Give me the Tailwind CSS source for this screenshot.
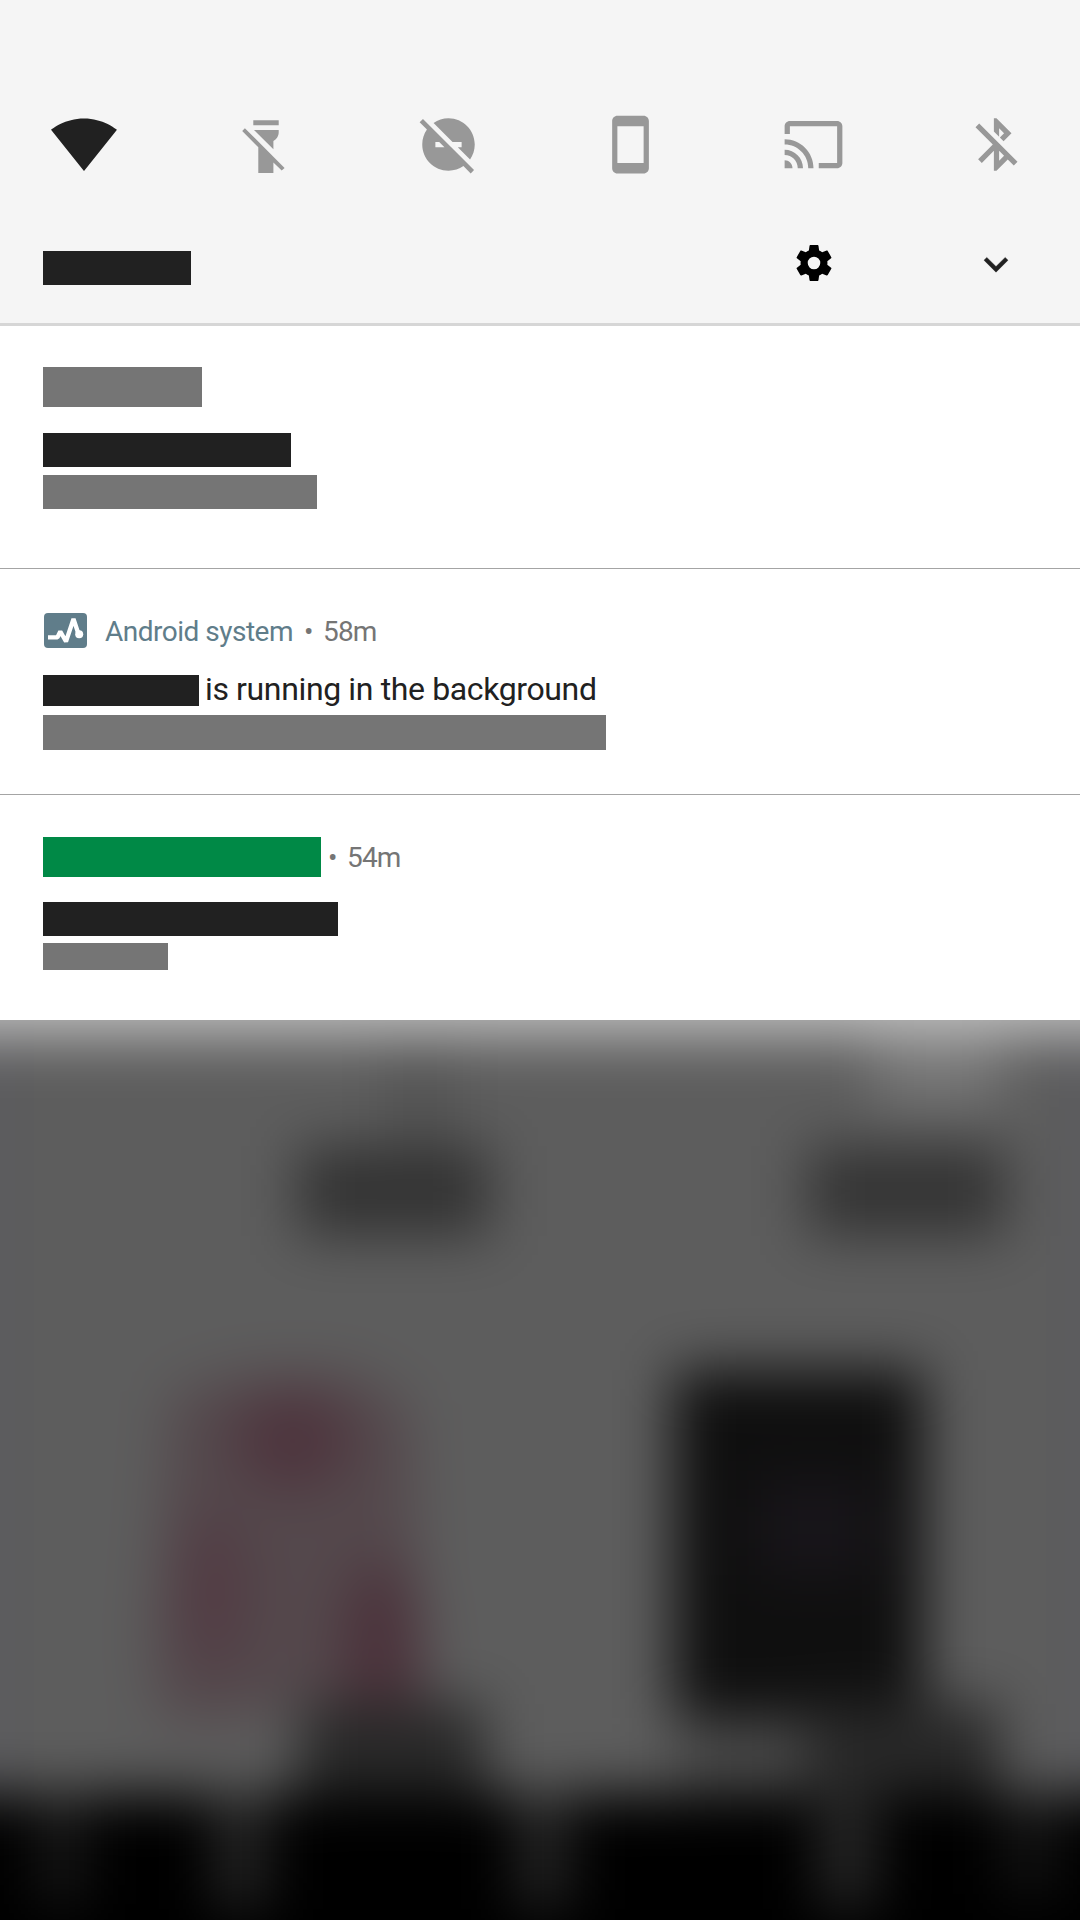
<!DOCTYPE html>
<html lang="en">
<head>
<meta charset="utf-8">
<title>Notification shade</title>
<script src="https://cdn.jsdelivr.net/npm/@tailwindcss/browser@4"></script>
</head>
<body class="w-[1080px] h-[1920px] flex flex-col overflow-hidden bg-[#5d5d5d] font-[Roboto,sans-serif]">

<!-- Quick settings -->
<header class="h-[326px] shrink-0 bg-[#f5f5f5] border-b-3 border-[#d6d6d6] flex flex-col pt-[108px]">
  <div class="pl-12 grid grid-cols-[182px_182px_182px_183px_183px_72px] h-[73px] text-[#989898] fill-current">
    <div class="w-[72px] pb-[2px] flex items-center justify-center text-[#212121]">
      <svg class="size-[68px]" viewBox="0 0 24 24"><path d="M12.01 21.49L23.64 7c-.45-.34-4.93-4-11.64-4C5.28 3 .81 6.66.36 7l11.63 14.49.01.01.01-.01z"/></svg>
    </div>
    <div class="w-[72px] flex items-start justify-center">
      <svg class="size-[72px]" viewBox="0 0 72 72"><path d="M23.3 12.2H48.7V17.2H23.3ZM24 22H48.7V24.5C48.7 28 46.5 31.5 43.4 33V41.2ZM14.9 20.2L54.6 59.9L51.7 62.6L43.4 54.4V65H28.3V39.2L12.2 23.1Z"/></svg>
    </div>
    <div class="w-[72px] flex items-center justify-center">
      <svg class="size-[63px]" viewBox="0 0 24 24"><path d="M17 11v2h-1.46l4.68 4.68C21.34 16.07 22 14.11 22 12c0-5.52-4.48-10-10-10-2.11 0-4.07.66-5.68 1.78L13.54 11H17zM2.27 2.27L1 3.54l2.78 2.78C2.66 7.93 2 9.89 2 12c0 5.52 4.48 10 10 10 2.11 0 4.07-.66 5.68-1.78L20.46 23l1.27-1.27L2.27 2.27zM7 13v-2h1.46l2 2H7z"/></svg>
    </div>
    <div class="w-[72px] flex items-center justify-center">
      <svg class="size-[63px]" viewBox="0 0 24 24"><path d="M17 1.01L7 1c-1.1 0-1.99.9-1.99 2v18c0 1.1.89 2 1.99 2h10c1.1 0 2-.9 2-2V3c0-1.1-.9-1.99-2-1.99zM17 19H7V5h10v14z"/></svg>
    </div>
    <div class="w-[72px] flex items-center justify-center">
      <svg class="size-[63px]" viewBox="0 0 24 24"><path d="M21 3H3c-1.1 0-2 .9-2 2v3h2V5h18v14h-7v2h7c1.1 0 2-.9 2-2V5c0-1.1-.9-2-2-2zM1 18v3h3c0-1.66-1.34-3-3-3zm0-4v2c2.76 0 5 2.24 5 5h2c0-3.87-3.13-7-7-7zm0-4v2c4.97 0 9 4.03 9 9h2c0-6.08-4.93-11-11-11z"/></svg>
    </div>
    <div class="w-[72px] flex items-center justify-center">
      <svg class="size-[63px]" viewBox="0 0 24 24"><path d="M13 5.83l1.88 1.88-1.6 1.6 1.41 1.41 3.02-3.02L12 2h-1v5.03l2 2v-3.2zM5.41 4L4 5.41 10.59 12 5 17.59 6.41 19 11 14.41V22h1l4.29-4.29 2.3 2.29L20 18.59 5.41 4zM13 18.17v-3.76l1.88 1.88L13 18.17z"/></svg>
    </div>
  </div>
  <div class="flex pl-[43px] pt-[59px]">
    <div class="mt-[11px] w-[148px] h-[34px] bg-[#212121]"></div>
    <svg class="ml-[601px] mt-[1px] w-[44px] h-[44px] fill-black" viewBox="-.28 -.28 24.56 24.56"><path d="M19.43 12.98c.04-.32.07-.64.07-.98s-.03-.66-.07-.98l2.11-1.65c.19-.15.24-.42.12-.64l-2-3.46c-.12-.22-.39-.3-.61-.22l-2.49 1c-.52-.4-1.08-.73-1.69-.98l-.38-2.65C14.46 2.18 14.25 2 14 2h-4c-.25 0-.46.18-.49.42l-.38 2.65c-.61.25-1.17.59-1.69.98l-2.49-1c-.23-.09-.49 0-.61.22l-2 3.46c-.13.22-.07.49.12.64l2.11 1.65c-.04.32-.07.65-.07.98s.03.66.07.98l-2.11 1.65c-.19.15-.24.42-.12.64l2 3.46c.12.22.39.3.61.22l2.49-1c.52.4 1.08.73 1.69.98l.38 2.65c.03.24.24.42.49.42h4c.25 0 .46-.18.49-.42l.38-2.65c.61-.25 1.17-.59 1.69-.98l2.49 1c.23.09.49 0 .61-.22l2-3.46c.12-.22.07-.49-.12-.64l-2.11-1.65zM12 15.5A3.5 3.5 0 1 1 12 8.5A3.5 3.5 0 1 1 12 15.5z"/></svg>
    <svg class="ml-[136px] size-12 fill-[#212121] stroke-[#212121]" viewBox="0 0 24 24" stroke-width=".2"><path d="M16.59 8.7L12 13.27 7.41 8.7 6 10.1l6 6 6-6z"/></svg>
  </div>
</header>

<!-- Notifications -->
<main class="shrink-0 bg-white">
  <section class="h-[243px] border-b border-[#a4a4a4] pl-[43px] pt-[41px]">
    <div class="w-[159px] h-10 bg-[#757575]"></div>
    <div class="mt-[26px] w-[248px] h-[34px] bg-[#212121]"></div>
    <div class="mt-2 w-[274px] h-[34px] bg-[#757575]"></div>
  </section>
  <section class="h-[226px] border-b border-[#a4a4a4] pl-[43px] pt-[44px]">
    <div class="flex h-[35px] text-[28px] leading-[36px] tracking-[-0.5px] text-[#757575]">
      <svg class="ml-px w-[43px] h-[35px] shrink-0" viewBox="0 0 43 35"><rect width="43" height="35" rx="4" fill="#607d8a"/><path d="M4 24.3H13.5L16.3 18.5L22 28.5L29.5 6L34.5 21" fill="none" stroke="#fff" stroke-width="4.3" stroke-linejoin="bevel"/><circle cx="35.2" cy="21.3" r="4" fill="#fff"/></svg>
      <span class="ml-[18px] mt-[1px] w-[199px] text-[#607d8a]">Android system</span>
      <span class="mt-[1px] w-[19px]">•</span>
      <span class="mt-[1px] tracking-[-0.8px]">58m</span>
    </div>
    <div class="mt-[22px] flex h-10 items-start">
      <div class="mt-[5px] w-[156px] h-[31px] bg-[#212121]"></div>
      <p class="ml-[6px] text-[32px] leading-[38px] tracking-[-0.37px] text-[#212121] whitespace-nowrap">is running in the background</p>
    </div>
    <div class="mt-[5px] w-[563px] h-[35px] bg-[#757575]"></div>
  </section>
  <section class="h-[225px] pl-[43px] pt-[42px]">
    <div class="flex h-10 text-[28px] leading-[42px] tracking-[-0.8px] text-[#757575]">
      <div class="w-[278px] h-10 bg-[#008946]"></div>
      <span class="ml-[7px] w-[19px]">•</span>
      <span>54m</span>
    </div>
    <div class="mt-[25px] w-[295px] h-[34px] bg-[#212121]"></div>
    <div class="mt-[7px] w-[125px] h-[27px] bg-[#757575]"></div>
  </section>
</main>

<!-- Dimmed, blurred app behind the shade -->
<svg class="block w-[1080px] h-[900px] shrink-0" viewBox="0 0 1080 900">
  <defs>
    <filter id="soft" filterUnits="userSpaceOnUse" x="-150" y="-150" width="1380" height="1200" color-interpolation-filters="sRGB"><feGaussianBlur stdDeviation="28"/></filter>
  </defs>
  <g filter="url(#soft)">
    <rect x="-200" y="-200" width="1480" height="1300" fill="#5d5d5d"/>
    <rect x="-200" y="-200" width="215" height="1300" fill="#5b5b5e"/>
    <rect x="1065" y="-200" width="215" height="1300" fill="#5b5b5e"/>
    <rect x="385" y="30" width="70" height="110" fill="#545454"/>
    <rect x="873" y="0" width="130" height="88" fill="#757575"/>
    <rect x="-200" y="-200" width="1480" height="215" fill="#c1c1c1"/>
    <rect x="298" y="126" width="192" height="90" fill="#333333"/>
    <rect x="808" y="126" width="197" height="90" fill="#343434"/>
    <path d="M172 372L250 352H350L410 385L418 560L428 690L300 680L240 700H160L152 620Z" fill="#54484c"/>
    <ellipse cx="293" cy="420" rx="58" ry="50" fill="#4e353e"/>
    <ellipse cx="212" cy="570" rx="34" ry="80" fill="#523c44"/>
    <ellipse cx="382" cy="635" rx="40" ry="95" fill="#4b323b"/>
    <rect x="674" y="350" width="250" height="348" fill="#0f0f0f"/>
    <rect x="755" y="460" width="120" height="95" fill="#18151a"/>
    <rect x="680" y="698" width="130" height="80" fill="#4a4a4a"/>
    <rect x="299" y="684" width="186" height="106" fill="#292929"/>
    <rect x="808" y="684" width="192" height="106" fill="#282828"/>
    <rect x="-200" y="774" width="1480" height="400" fill="#000"/>
    <rect x="40" y="774" width="42" height="110" fill="#1b1b1b"/>
    <rect x="216" y="774" width="50" height="115" fill="#282828"/>
    <rect x="518" y="774" width="50" height="115" fill="#282828"/>
    <rect x="820" y="774" width="54" height="115" fill="#2a2a2a"/>
    <rect x="1005" y="774" width="50" height="100" fill="#151515"/>
  </g>
</svg>
</body>
</html>
